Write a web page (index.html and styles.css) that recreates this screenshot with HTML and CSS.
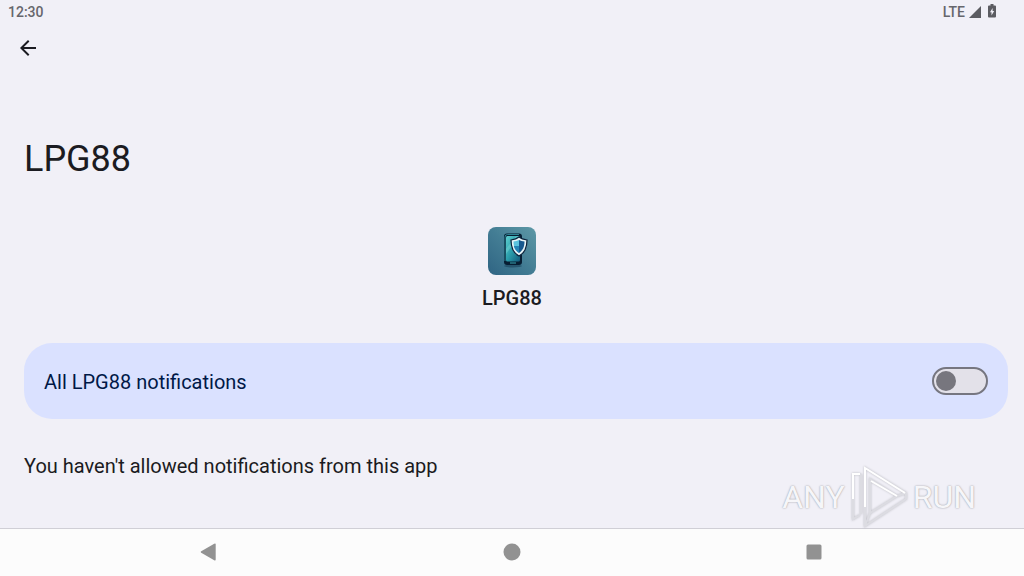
FILE: index.html
```html
<!DOCTYPE html>
<html lang="en">
<head>
    <meta charset="UTF-8">
    <meta name="viewport" content="width=device-width, initial-scale=1.0">
    <title>LPG88</title>
    <link rel="stylesheet" href="styles.css">
</head>
<body>
    <div class="status-bar">
        <span class="clock">12:30</span>
        <div class="status-icons">
            <span>LTE</span>
            <svg class="signal" viewBox="0 0 12 12"><path d="M12 0v12H0z"/></svg>
            <svg class="battery" viewBox="0 0 8 14"><path fill-rule="evenodd" d="M2.500 0h3v1.500H7a1 1 0 0 1 1 1V12.500a1 1 0 0 1-1 1H1a1 1 0 0 1-1-1V2.500a1 1 0 0 1 1-1h1.500zM4.600 4L2 8.300h1.500V11.500L6.200 7H4.600z"/></svg>
        </div>
    </div>

    <header class="toolbar">
        <button class="back" type="button" aria-label="Navigate up">
            <svg viewBox="0 0 24 24"><path d="M20 11H7.830l5.590-5.590L12 4l-8 8 8 8 1.410-1.410L7.830 13H20z"/></svg>
        </button>
    </header>

    <main class="content">
        <h1>LPG88</h1>

        <section class="app-info">
            <svg class="app-icon" viewBox="0 0 48 48">
                <defs>
                    <linearGradient id="iconBg" x1="0" y1="1" x2="1" y2="0">
                        <stop offset="0" stop-color="#2f6483"/>
                        <stop offset="0.5" stop-color="#437d94"/>
                        <stop offset="1" stop-color="#5d98a6"/>
                    </linearGradient>
                    <linearGradient id="screen" x1="0" y1="0" x2="1" y2="1">
                        <stop offset="0" stop-color="#5fd0cf"/>
                        <stop offset="0.5" stop-color="#2a9dab"/>
                        <stop offset="1" stop-color="#125a7b"/>
                    </linearGradient>
                </defs>
                <rect width="48" height="48" rx="8" fill="url(#iconBg)"/>
                <ellipse cx="25" cy="39" rx="9" ry="1.500" fill="#173f58" opacity="0.6"/>
                <rect x="16" y="6.500" width="18" height="31.500" rx="3" fill="#071e33"/>
                <path d="M17 34V10q0-2.500 2.500-2.500H31" fill="none" stroke="#48c5d3" stroke-width="0.6"/>
                <rect x="18" y="9" width="14" height="25.500" rx="1.500" fill="url(#screen)"/>
                <path d="M18 22L28 9h3L18 27z" fill="#8be6df" opacity="0.35"/>
                <path d="M22 36h6" stroke="#48c5d3" stroke-width="0.8"/>
                <path d="M31 10c2.500 2 5 2.500 8 3 0 8-2 13-8 16-6-3-8-8-8-16 3-.5 5.500-1 8-3z" fill="#e6f4f7" stroke="#092039" stroke-width="1.200"/>
                <path d="M31 13v13c-4-2.500-5.500-6.500-5.500-11.500 2.200-.2 3.800-.6 5.500-1.500z" fill="#5cc2dd"/>
                <path d="M31 13c1.700.9 3.300 1.300 5.500 1.500 0 5-1.500 9-5.500 11.500z" fill="#16588e"/>
                <path d="M25.800 19H31v7c-2.800-1.800-4.500-4-5.200-7z" fill="#2584b5"/>
            </svg>
            <h2>LPG88</h2>
        </section>

        <label class="switch-card">
            <span class="switch-label">All LPG88 notifications</span>
            <input class="switch" type="checkbox" role="switch">
        </label>

        <p class="message">You haven't allowed notifications from this app</p>
    </main>

    <nav class="nav-bar">
        <button type="button" aria-label="Back">
            <svg viewBox="0 0 20 20"><path d="M1.200 9.200L14.200 1.800Q15.700 1 15.700 2.600V17.400Q15.700 19 14.200 18.200L1.200 10.800Q0 10 1.200 9.200z"/></svg>
        </button>
        <button type="button" aria-label="Home">
            <svg viewBox="0 0 20 20"><circle cx="10" cy="10" r="8.500"/></svg>
        </button>
        <button type="button" aria-label="Overview">
            <svg viewBox="0 0 20 20"><rect x="2.500" y="2.500" width="15" height="15" rx="1.500"/></svg>
        </button>
    </nav>

    <div class="watermark">
        <span>ANY</span>
        <svg viewBox="0 0 56 64">
            <g class="edge">
                <path d="M2 9v45l7-4M10 9v40"/>
                <path d="M14 3v58l41-27v-6zM19 14v34l27-17z"/>
                <path d="M14 61l5-13M46 31l9-3"/>
            </g>
            <path class="shine" d="M2 34V9h7M14 42V3l40 25M20 16l26 15"/>
        </svg>
        <span>RUN</span>
    </div>
</body>
</html>
```

FILE: styles.css
```css
* {
    box-sizing: border-box;
}
body {
    display: flex;
    flex-direction: column;
    min-height: 100vh;
    margin: 0;
    background: #f1f0f7;
    color: #1b1b21;
    font-family: Roboto, sans-serif;
    font-size: 20px;
    line-height: 24px;
}
button {
    display: flex;
    align-items: center;
    justify-content: center;
    padding: 0;
    border: none;
    background: none;
    cursor: pointer;
}
h1, h2, p {
    margin: 0;
}
.status-bar {
    display: flex;
    justify-content: space-between;
    height: 24px;
    padding: 0 28px 0 8px;
    color: #66666c;
    font-size: 14px;
    font-weight: 500;
}
.status-icons {
    display: flex;
    align-items: center;
    gap: 4px;
}
.status-icons svg {
    fill: #5c5c62;
}
.signal {
    width: 12px;
    height: 12px;
}
.battery {
    width: 8px;
    height: 14px;
    margin: 0 0 2px 3px;
}
.toolbar {
    display: flex;
    padding: 0 4px;
}
.back {
    width: 48px;
    height: 48px;
}
.back svg {
    width: 24px;
    height: 24px;
    fill: #1b1b21;
}
.content {
    flex: 1;
    padding: 65px 16px 48px 24px;
}
h1 {
    font-size: 36px;
    font-weight: 400;
    line-height: 44px;
}
.app-info {
    display: flex;
    flex-direction: column;
    align-items: center;
    gap: 11px;
    padding: 46px 8px 33px 0;
}
.app-icon {
    width: 48px;
    height: 48px;
}
h2 {
    font-size: 20px;
    font-weight: 500;
}
.switch-card {
    display: flex;
    align-items: center;
    justify-content: space-between;
    min-height: 76px;
    padding: 0 20px;
    border-radius: 28px;
    background: #dae1ff;
    color: #001847;
    cursor: pointer;
}
.switch-label {
    padding-top: 2px;
}
.switch {
    appearance: none;
    display: flex;
    align-items: center;
    width: 56px;
    height: 28px;
    margin: 0;
    padding: 0 2px;
    border: 2px solid #767680;
    border-radius: 14px;
    background: #e3e1e9;
    cursor: pointer;
}
.switch::before {
    content: "";
    width: 20px;
    height: 20px;
    border-radius: 50%;
    background: #77767e;
}
.switch:checked {
    justify-content: flex-end;
    background: #b3c5ff;
}
.message {
    padding-top: 35px;
}
.nav-bar {
    display: flex;
    justify-content: center;
    gap: 254px;
    padding-bottom: 1px;
    border-top: 1px solid #d0cfd6;
    background: #fcfcfc;
}
.nav-bar button {
    width: 48px;
    height: 46px;
}
.nav-bar svg {
    width: 20px;
    height: 20px;
    fill: #929292;
}
.watermark {
    position: absolute;
    right: 48px;
    bottom: 47px;
    display: flex;
    align-items: center;
    gap: 6px;
    color: #f6f6f9;
    font-size: 32px;
    line-height: 64px;
    text-shadow: 0 0 2px #a2a2aa, 0 0 1px #c4c4cb;
    pointer-events: none;
}
.watermark svg {
    width: 56px;
    height: 64px;
    fill: none;
    filter: drop-shadow(0 0 1px #bbbbc2);
}
.edge {
    stroke: #dcdce2;
    stroke-width: 2;
}
.shine {
    stroke: #ffffff;
    stroke-width: 2;
}
```
